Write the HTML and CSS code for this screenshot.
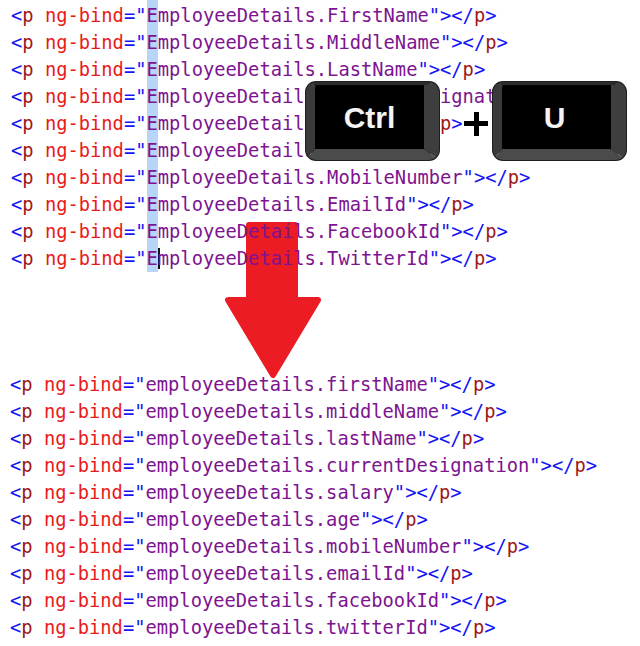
FILE: index.html
```html
<!DOCTYPE html>
<html>
<head>
<meta charset="utf-8">
<link rel="stylesheet" href="styles.css">
</head>
<body>
<main class="stage">
  <svg class="arrow" width="640" height="646" viewBox="0 0 640 646">
    <path d="M249 225 L295 225 L295 300 L318 300 L273 375 L228 300 L249 300 Z" fill="#ec1c24" stroke="#ec1c24" stroke-width="6" stroke-linejoin="round"/>
  </svg>

  <section class="code code-top">
    <div class="line"><span class="d">&lt;</span><span class="t">p</span> <span class="a">ng-bind</span><span class="d">="</span><span class="v"><span class="sel">E</span>mployeeDetails.FirstName</span><span class="d">"&gt;&lt;/</span><span class="t">p</span><span class="d">&gt;</span></div>
    <div class="line"><span class="d">&lt;</span><span class="t">p</span> <span class="a">ng-bind</span><span class="d">="</span><span class="v"><span class="sel">E</span>mployeeDetails.MiddleName</span><span class="d">"&gt;&lt;/</span><span class="t">p</span><span class="d">&gt;</span></div>
    <div class="line"><span class="d">&lt;</span><span class="t">p</span> <span class="a">ng-bind</span><span class="d">="</span><span class="v"><span class="sel">E</span>mployeeDetails.LastName</span><span class="d">"&gt;&lt;/</span><span class="t">p</span><span class="d">&gt;</span></div>
    <div class="line"><span class="d">&lt;</span><span class="t">p</span> <span class="a">ng-bind</span><span class="d">="</span><span class="v"><span class="sel">E</span>mployeeDetails.CurrentDesignation</span><span class="d">"&gt;&lt;/</span><span class="t">p</span><span class="d">&gt;</span></div>
    <div class="line"><span class="d">&lt;</span><span class="t">p</span> <span class="a">ng-bind</span><span class="d">="</span><span class="v"><span class="sel">E</span>mployeeDetails.Salary</span><span class="d">"&gt;&lt;/</span><span class="t">p</span><span class="d">&gt;</span></div>
    <div class="line"><span class="d">&lt;</span><span class="t">p</span> <span class="a">ng-bind</span><span class="d">="</span><span class="v"><span class="sel">E</span>mployeeDetails.Age</span><span class="d">"&gt;&lt;/</span><span class="t">p</span><span class="d">&gt;</span></div>
    <div class="line"><span class="d">&lt;</span><span class="t">p</span> <span class="a">ng-bind</span><span class="d">="</span><span class="v"><span class="sel">E</span>mployeeDetails.MobileNumber</span><span class="d">"&gt;&lt;/</span><span class="t">p</span><span class="d">&gt;</span></div>
    <div class="line"><span class="d">&lt;</span><span class="t">p</span> <span class="a">ng-bind</span><span class="d">="</span><span class="v"><span class="sel">E</span>mployeeDetails.EmailId</span><span class="d">"&gt;&lt;/</span><span class="t">p</span><span class="d">&gt;</span></div>
    <div class="line"><span class="d">&lt;</span><span class="t">p</span> <span class="a">ng-bind</span><span class="d">="</span><span class="v"><span class="sel">E</span>mployeeDetails.FacebookId</span><span class="d">"&gt;&lt;/</span><span class="t">p</span><span class="d">&gt;</span></div>
    <div class="line"><span class="d">&lt;</span><span class="t">p</span> <span class="a">ng-bind</span><span class="d">="</span><span class="v"><span class="sel">E</span><span class="caret"></span>mployeeDetails.TwitterId</span><span class="d">"&gt;&lt;/</span><span class="t">p</span><span class="d">&gt;</span></div>
  </section>

  <div class="keys">
    <div class="key key-ctrl"><div class="face">Ctrl</div></div>
    <div class="plus"></div>
    <div class="key key-u"><div class="face">U</div></div>
  </div>

  <section class="code code-bottom">
    <div class="line"><span class="d">&lt;</span><span class="t">p</span> <span class="a">ng-bind</span><span class="d">="</span><span class="v">employeeDetails.firstName</span><span class="d">"&gt;&lt;/</span><span class="t">p</span><span class="d">&gt;</span></div>
    <div class="line"><span class="d">&lt;</span><span class="t">p</span> <span class="a">ng-bind</span><span class="d">="</span><span class="v">employeeDetails.middleName</span><span class="d">"&gt;&lt;/</span><span class="t">p</span><span class="d">&gt;</span></div>
    <div class="line"><span class="d">&lt;</span><span class="t">p</span> <span class="a">ng-bind</span><span class="d">="</span><span class="v">employeeDetails.lastName</span><span class="d">"&gt;&lt;/</span><span class="t">p</span><span class="d">&gt;</span></div>
    <div class="line"><span class="d">&lt;</span><span class="t">p</span> <span class="a">ng-bind</span><span class="d">="</span><span class="v">employeeDetails.currentDesignation</span><span class="d">"&gt;&lt;/</span><span class="t">p</span><span class="d">&gt;</span></div>
    <div class="line"><span class="d">&lt;</span><span class="t">p</span> <span class="a">ng-bind</span><span class="d">="</span><span class="v">employeeDetails.salary</span><span class="d">"&gt;&lt;/</span><span class="t">p</span><span class="d">&gt;</span></div>
    <div class="line"><span class="d">&lt;</span><span class="t">p</span> <span class="a">ng-bind</span><span class="d">="</span><span class="v">employeeDetails.age</span><span class="d">"&gt;&lt;/</span><span class="t">p</span><span class="d">&gt;</span></div>
    <div class="line"><span class="d">&lt;</span><span class="t">p</span> <span class="a">ng-bind</span><span class="d">="</span><span class="v">employeeDetails.mobileNumber</span><span class="d">"&gt;&lt;/</span><span class="t">p</span><span class="d">&gt;</span></div>
    <div class="line"><span class="d">&lt;</span><span class="t">p</span> <span class="a">ng-bind</span><span class="d">="</span><span class="v">employeeDetails.emailId</span><span class="d">"&gt;&lt;/</span><span class="t">p</span><span class="d">&gt;</span></div>
    <div class="line"><span class="d">&lt;</span><span class="t">p</span> <span class="a">ng-bind</span><span class="d">="</span><span class="v">employeeDetails.facebookId</span><span class="d">"&gt;&lt;/</span><span class="t">p</span><span class="d">&gt;</span></div>
    <div class="line"><span class="d">&lt;</span><span class="t">p</span> <span class="a">ng-bind</span><span class="d">="</span><span class="v">employeeDetails.twitterId</span><span class="d">"&gt;&lt;/</span><span class="t">p</span><span class="d">&gt;</span></div>
  </section>
</main>
</body>
</html>
```
FILE: styles.css
```css
html, body {
  margin: 0;
  padding: 0;
  background: #fff;
}

.stage {
  position: relative;
  width: 640px;
  height: 646px;
  overflow: hidden;
  display: flex;
  flex-direction: column;
}

.arrow {
  position: absolute;
  left: 0;
  top: 0;
  z-index: 0;
}

.code {
  position: relative;
  z-index: 1;
  font-family: "DejaVu Sans Mono", "Liberation Mono", monospace;
  font-size: 18.75px;
  line-height: 27px;
}

.code-top {
  padding: 2px 0 0 11px;
}

.code-bottom {
  padding: 99px 0 0 10px;
}

.line {
  height: 27px;
  white-space: pre;
}

.d { color: #1414f5; }
.t { color: #a01818; }
.a { color: #ea1a1a; }
.v { color: #7d1490; }

.sel {
  display: inline-block;
  background: #b6d5f8;
  line-height: 27px;
  height: 27px;
  vertical-align: top;
}

.code-top .line:first-child .sel {
  margin-top: -2px;
  height: 29px;
  line-height: 31px;
}

.caret {
  display: inline-block;
  width: 0;
  height: 21px;
  border-left: 2px solid #111;
  margin-right: -2px;
  vertical-align: -4px;
}

.keys {
  position: absolute;
  left: 306px;
  top: 82px;
  z-index: 2;
  display: flex;
  align-items: flex-start;
}

.key {
  box-sizing: border-box;
  width: 133px;
  height: 78px;
  border-style: solid;
  border-width: 3px 15px 11px 9px;
  border-color: #2c2c2c #3e3e3e #4b4b4b #3a3a3a;
  border-radius: 10px;
  background: #000;
  box-shadow: 0 0 0 1px #1e1e1e;
  display: flex;
}

.face {
  flex: 1;
  background: #000;
  border-radius: 7px;
  display: flex;
  align-items: center;
  justify-content: center;
  color: #f4f4f4;
  font-family: "Liberation Sans", Arial, sans-serif;
  font-weight: bold;
  font-size: 30px;
  padding-top: 2px;
}

.key-u .face {
  padding-right: 4px;
}

.plus {
  position: relative;
  width: 24px;
  height: 24px;
  margin: 30px 5px 0 25px;
}

.plus::before,
.plus::after {
  content: "";
  position: absolute;
  background: #000;
}

.plus::before {
  left: 0;
  right: 0;
  top: 9px;
  height: 5px;
}

.plus::after {
  top: 0;
  bottom: 0;
  left: 10px;
  width: 5px;
}
```
